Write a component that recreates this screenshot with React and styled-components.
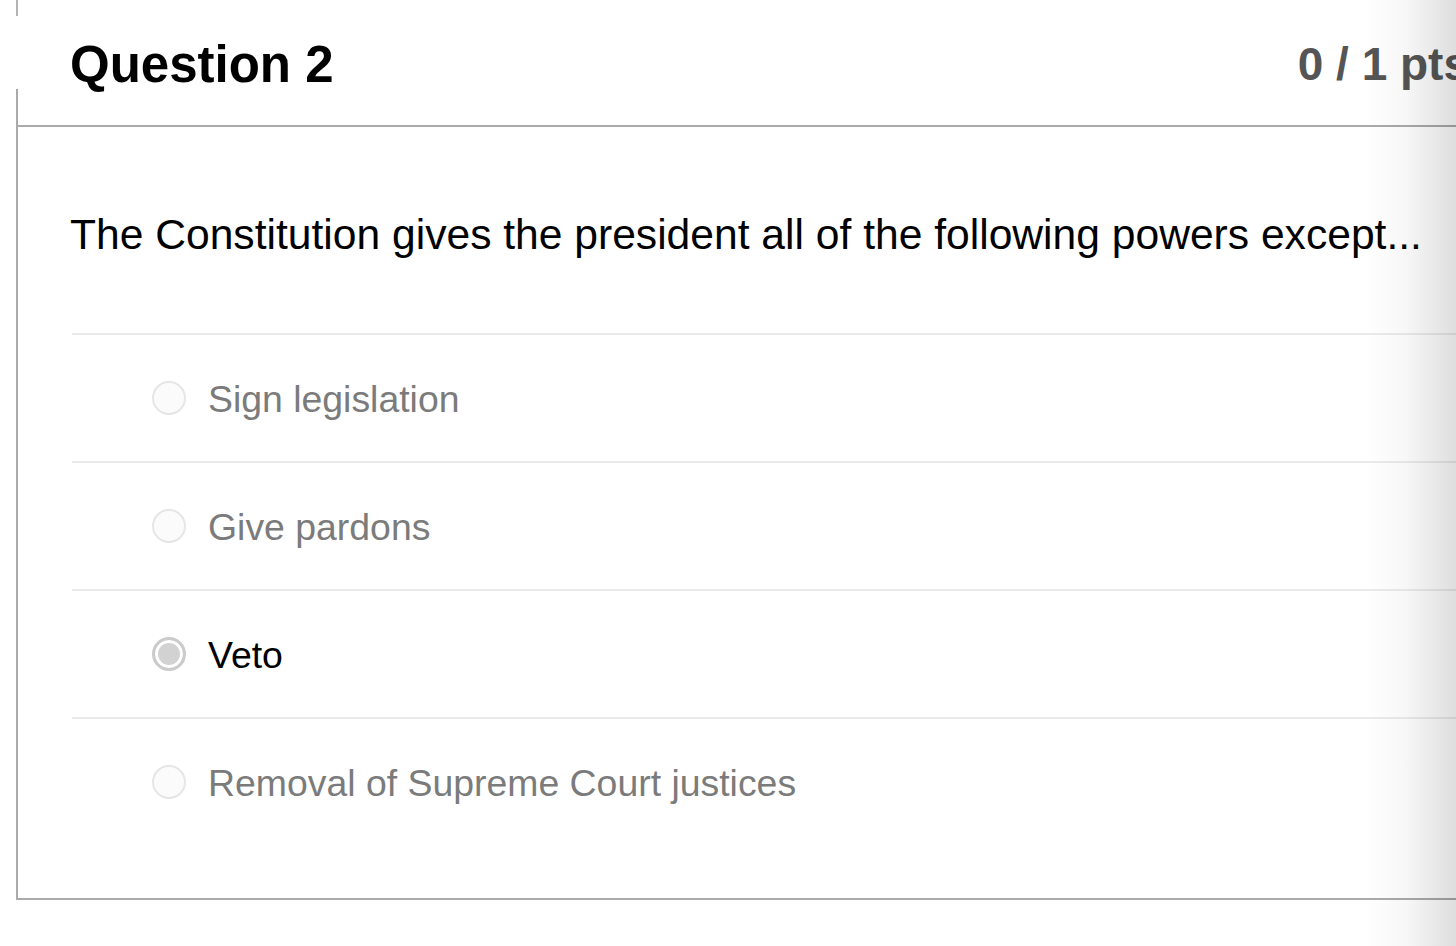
import React from 'react';
import styled, { createGlobalStyle } from 'styled-components';

const GlobalStyle = createGlobalStyle`
  html, body {
    margin: 0;
    padding: 0;
    background: #fff;
    overflow: hidden;
  }
  body {
    font-family: 'Liberation Sans', Arial, Helvetica, sans-serif;
    color: #000;
  }
`;

const Page = styled.div`
  width: 1456px;
  height: 946px;
  padding-left: 16px;
  box-sizing: border-box;
  overflow: hidden;
  position: relative;
`;

// bit of the previous question's border peeking in at the top
const PrevStub = styled.div`
  height: 16px;
  border-left: 2px solid #b3b3b3;
`;

const Header = styled.div`
  width: 1500px;
  height: 73px;
  box-sizing: border-box;
  padding: 23px 0 0 54px;
  display: flex;
  align-items: flex-start;
`;

const Title = styled.h2`
  margin: 0;
  font-size: 51px;
  line-height: 1;
  font-weight: 700;
  color: #000;
`;

const Points = styled.div`
  margin-left: auto;
  padding-right: 47px;
  padding-top: 2px;
  font-size: 46px;
  line-height: 1;
  font-weight: 700;
  color: #555;
  white-space: nowrap;
`;

const Card = styled.div`
  width: 1500px;
  border-left: 2px solid #aaa;
  border-bottom: 2px solid #aaa;
  padding-bottom: 53px;
`;

const HeaderRule = styled.div`
  height: 36px;
  border-bottom: 2px solid #aaa;
`;

const Body = styled.div`
  padding: 86px 0 0 54px;
`;

const QuestionText = styled.p`
  margin: 0 0 77px -2px;
  font-size: 42.6px;
  line-height: 1;
  color: #000;
`;

const AnswerList = styled.div`
  display: flex;
  flex-direction: column;
`;

const AnswerRow = styled.label`
  height: 128px;
  box-sizing: border-box;
  border-top: 2px solid #ebebeb;
  display: flex;
  align-items: center;
  padding-left: 80px;
  gap: 22px;
`;

const Radio = styled.span`
  width: 34px;
  height: 34px;
  box-sizing: border-box;
  border-radius: 50%;
  flex-shrink: 0;
  border: ${(p) => (p.$checked ? '3px solid #cbcbcb' : '2px solid #e6e6e6')};
  background: ${(p) => (p.$checked ? '#d2d2d2' : '#fbfbfb')};
  box-shadow: ${(p) => (p.$checked ? 'inset 0 0 0 3px #fff' : 'none')};
`;

const AnswerText = styled.span`
  margin-top: 5px;
  font-size: 37.4px;
  line-height: 1;
  color: ${(p) => (p.$checked ? '#000' : '#7b7b7b')};
`;

// scroll shadow fading in on the right edge
const EdgeShade = styled.div`
  position: absolute;
  top: 0;
  right: 0;
  width: 92px;
  height: 100%;
  pointer-events: none;
  background: linear-gradient(to right, rgba(0, 0, 0, 0) 0%, rgba(0, 0, 0, 0.03) 45%, rgba(0, 0, 0, 0.13) 100%);
`;

const answers = [
  { text: 'Sign legislation' },
  { text: 'Give pardons' },
  { text: 'Veto', checked: true },
  { text: 'Removal of Supreme Court justices' },
];

const App = () => {
  return (
    <>
      <GlobalStyle />
      <Page>
        <PrevStub />
        <Header>
          <Title>Question 2</Title>
          <Points>0 / 1 pts</Points>
        </Header>
        <Card>
          <HeaderRule />
          <Body>
            <QuestionText>
              The Constitution gives the president all of the following powers except...
            </QuestionText>
            <AnswerList>
              {answers.map((a) => (
                <AnswerRow key={a.text}>
                  <Radio $checked={a.checked} />
                  <AnswerText $checked={a.checked}>{a.text}</AnswerText>
                </AnswerRow>
              ))}
            </AnswerList>
          </Body>
        </Card>
        <EdgeShade />
      </Page>
    </>
  );
};

export default App;
